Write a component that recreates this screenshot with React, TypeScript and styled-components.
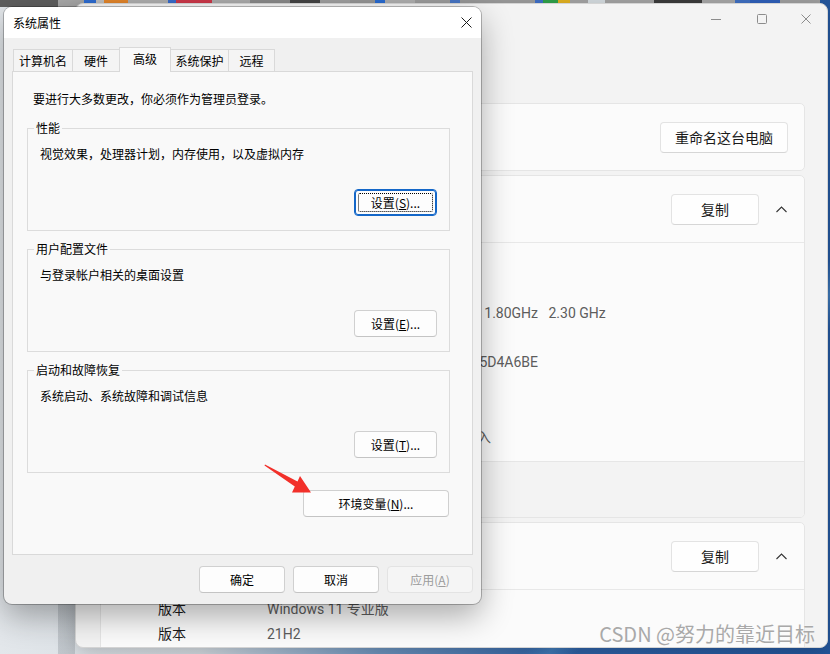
import React from "react";
import styled, { createGlobalStyle, css } from "styled-components";

const GlobalStyle = createGlobalStyle`
  html, body {
    margin: 0;
    padding: 0;
  }
  body {
    width: 830px;
    height: 654px;
    overflow: hidden;
    background: #dfe4e9;
  }
  * {
    box-sizing: border-box;
  }
`;

// desktop behind both windows
const Desktop = styled.div`
  position: relative;
  width: 830px;
  height: 654px;
  overflow: hidden;
  background:
    linear-gradient(to right, transparent 58px, rgba(60, 70, 80, 0.18) 58px, rgba(60, 70, 80, 0.18) 75px, transparent 75px),
    linear-gradient(128deg, transparent 77%, rgba(70, 130, 190, 0.75) 79%, transparent 81%),
    linear-gradient(to right, #e3e7eb 0, #d4dbe1 200px, #6d93bd 380px, #2f62a6 560px, #23569c 830px);
`;

const IconStrip = styled.div`
  display: flex;
  height: 7px;
`;

const StripBit = styled.div<{ $w: number; $c: string }>`
  width: ${(p) => p.$w}px;
  background: ${(p) => p.$c};
`;

/* ---------- settings window (behind) ---------- */

const SettingsWindow = styled.section`
  position: absolute;
  left: 75px;
  top: 3px;
  width: 753px;
  height: 645px;
  z-index: 1;
  display: flex;
  flex-direction: column;
  background: #f3f3f3;
  border: 1px solid #d4d4d4;
  border-radius: 8px;
  overflow: hidden;
  box-shadow: 0 6px 22px rgba(0, 0, 0, 0.2);
  font-family: Roboto, "Noto Sans CJK SC", sans-serif;
  font-size: 14px;
  color: #1b1b1b;
`;

const WinTitleBar = styled.div`
  height: 29px;
  flex: none;
  display: flex;
  justify-content: flex-end;
  align-items: center;
`;

const WinControl = styled.div<{ $w: number }>`
  width: ${(p) => p.$w}px;
  height: 29px;
  display: flex;
  align-items: center;
  justify-content: center;
`;

const CardColumn = styled.div`
  display: flex;
  flex-direction: column;
  gap: 4px;
  padding: 70px 22px 0 24px;
`;

const Card = styled.div`
  flex: none;
  background: #fbfbfb;
  border: 1px solid #e5e5e5;
  border-radius: 5px;
  overflow: hidden;
`;

const CardHeader = styled.div<{ $h: number; $pr: number; $divider?: boolean }>`
  height: ${(p) => p.$h}px;
  display: flex;
  align-items: center;
  gap: 14px;
  padding: 0 ${(p) => p.$pr}px 0 57px;
  ${(p) => p.$divider && css`
    border-bottom: 1px solid #e8e8e8;
    box-sizing: content-box;
  `}
`;

const HeaderTitle = styled.div`
  flex: 1;
  color: #1b1b1b;
`;

const FluentButton = styled.div<{ $w: number }>`
  width: ${(p) => p.$w}px;
  height: 31px;
  display: flex;
  align-items: center;
  justify-content: center;
  background: #fefefe;
  border: 1px solid #e3e3e3;
  border-bottom-color: #d6d6d6;
  border-radius: 4px;
  color: #1b1b1b;
`;

const Chevron = styled.div`
  width: 16px;
  display: flex;
  justify-content: center;
`;

const SpecBody = styled.div<{ $h: number; $pt: number }>`
  height: ${(p) => p.$h}px;
  padding-top: ${(p) => p.$pt}px;
`;

const SpecRow = styled.div`
  display: grid;
  grid-template-columns: 109px 1fr;
  padding-left: 57px;
  height: 24.8px;
  line-height: 24.8px;
  white-space: pre;
`;

const SpecLabel = styled.span`
  color: #1b1b1b;
`;

const SpecValue = styled.span`
  color: #5d5d5d;
`;

const CardFooter = styled.div`
  height: 56px;
  border-top: 1px solid #e6e6e6;
  background: #f3f3f3;
`;

/* ---------- system properties dialog ---------- */

const Dialog = styled.div`
  position: absolute;
  left: 4px;
  top: 7px;
  width: 477px;
  height: 597px;
  z-index: 2;
  display: flex;
  flex-direction: column;
  background: #f0f0f0;
  border-radius: 8px;
  overflow: hidden;
  box-shadow: 0 0 0 1px rgba(0, 0, 0, 0.25), 0 12px 32px rgba(0, 0, 0, 0.32);
  font-family: "Noto Sans CJK SC", "Microsoft YaHei", sans-serif;
  font-size: 12px;
  line-height: 16px;
  color: #000;
`;

const DialogTitleBar = styled.div`
  height: 31px;
  flex: none;
  display: flex;
  align-items: center;
  justify-content: space-between;
  padding-left: 9px;
  background: #fff;
`;

const DialogClose = styled.div`
  width: 30px;
  height: 31px;
  display: flex;
  align-items: center;
  justify-content: center;
`;

const DialogBody = styled.div`
  flex: 1;
  display: flex;
  flex-direction: column;
  padding: 11px 8px 11px;
`;

const TabStrip = styled.div`
  height: 22px;
  display: flex;
  align-items: flex-end;
  padding-left: 1px;
  position: relative;
  z-index: 1;
`;

const Tab = styled.div<{ $w: number; $active?: boolean }>`
  width: ${(p) => p.$w}px;
  height: 22px;
  display: flex;
  align-items: center;
  justify-content: center;
  border: 1px solid #d9d9d9;
  border-bottom: none;
  background: #f4f4f4;
  & + & {
    margin-left: -1px;
  }
  ${(p) => p.$active && css`
    height: 25px;
    margin-bottom: -1px;
    background: #f9f9f9;
    position: relative;
    z-index: 1;
    padding-bottom: 3px;
  `}
`;

const TabPanel = styled.div`
  flex: 1;
  background: #f9f9f9;
  border: 1px solid #d9d9d9;
  padding: 19px 0 0 14px;
`;

const Notice = styled.div`
  margin-left: 6px;
`;

const GroupBox = styled.fieldset`
  width: 423px;
  margin: 10px 0 0;
  padding: 0 12px 14px;
  border: 1px solid #dcdcdc;
  min-width: 0;
  &:first-of-type {
    margin-top: 13px;
  }
`;

const GroupLegend = styled.legend`
  padding: 0 2px;
  margin-left: -6px;
  line-height: 16px;
`;

const GroupDesc = styled.div`
  margin-top: 10px;
`;

const ButtonLine = styled.div<{ $mt: number; $pr?: number }>`
  display: flex;
  justify-content: flex-end;
  margin-top: ${(p) => p.$mt}px;
  padding-right: ${(p) => p.$pr ?? 0}px;
`;

const EnvLine = styled(ButtonLine)`
  width: 423px;
`;

const WinButton = styled.div<{ $w: number; $focused?: boolean; $muted?: boolean }>`
  position: relative;
  width: ${(p) => p.$w}px;
  height: 27px;
  display: flex;
  align-items: center;
  justify-content: center;
  background: #fdfdfd;
  border: 1px solid #d0d0d0;
  border-bottom-color: #c4c4c4;
  border-radius: 4px;
  color: #000;
  ${(p) => p.$focused && css`
    border-color: #1467c8;
    box-shadow: inset 0 0 0 1px #1467c8;
    &::after {
      content: "";
      position: absolute;
      inset: 3px;
      border: 1px dotted #000;
      border-radius: 2px;
    }
  `}
  ${(p) => p.$muted && css`
    background: #f5f5f5;
    border-color: #e3e3e3;
    color: #9c9c9c;
  `}
`;

const Caption = styled.span`
  white-space: nowrap;
`;

const BottomBar = styled.div`
  display: flex;
  justify-content: flex-end;
  gap: 8px;
  margin-top: 11px;
`;

const Arrow = styled.svg`
  position: absolute;
  left: 260px;
  top: 460px;
  z-index: 3;
`;

const Watermark = styled.div`
  position: absolute;
  right: 15px;
  top: 622px;
  z-index: 4;
  font-family: "Noto Sans CJK SC", sans-serif;
  font-size: 20px;
  line-height: 24px;
  color: #a9a9a9;
  text-shadow: 0 0 2px rgba(255, 255, 255, 0.8);
`;

const strip = [
  [58, "#5e5e5e"], [26, "#a8a8a8"], [12, "#2f6fd6"], [8, "#c4c4c4"], [24, "#e8892c"],
  [40, "#b3b3b3"], [8, "#3a6fd0"], [36, "#d23a4c"], [38, "#b0b0b0"], [40, "#8e8e8e"],
  [30, "#474747"], [30, "#a5a5a5"], [25, "#9a9a9a"], [10, "#2a6fd8"], [30, "#b4b4b4"],
  [35, "#a0a0a0"], [10, "#4a7acb"], [75, "#9c9c9c"], [8, "#3e6fc6"], [15, "#2fa04a"],
  [12, "#e0b020"], [18, "#a3a3a3"], [17, "#d3dade"], [49, "#a2a2a2"], [48, "#3b3b3b"],
  [33, "#a6a6a6"], [15, "#3f6fc0"], [30, "#2f5fb8"], [40, "#9e9e9e"],
] as const;

const tabs = [
  { label: "计算机名", w: 60 },
  { label: "硬件", w: 48 },
  { label: "高级", w: 52, active: true },
  { label: "系统保护", w: 59 },
  { label: "远程", w: 47 },
];

const groups = [
  { title: "性能", desc: "视觉效果，处理器计划，内存使用，以及虚拟内存", key: "S", focused: true },
  { title: "用户配置文件", desc: "与登录帐户相关的桌面设置", key: "E" },
  { title: "启动和故障恢复", desc: "系统启动、系统故障和调试信息", key: "T" },
];

const deviceSpecs = [
  ["设备名称", "DESKTOP-7QH2K4M"],
  ["处理器", "Intel(R) Core(TM) i5-8250U CPU @ 1.80GHz   2.30 GHz"],
  ["机带 RAM", "8.00 GB (7.85 GB 可用)"],
  ["设备 ID", "8E5A1C02-3F7B-4D9E-A21C-7B905D4A6BE"],
  ["产品 ID", "00330-80000-00000-AA442"],
  ["系统类型", "64 位操作系统, 基于 x64 的处理器"],
  ["笔和触控", "没有可用于此显示器的笔或触控输入"],
];

const windowsSpecs = [
  ["版本", "Windows 11 专业版"],
  ["版本", "21H2"],
];

const ChevronUp = () => (
  <svg width="11" height="7" viewBox="0 0 11 7">
    <polyline points="0.5,6 5.5,1 10.5,6" fill="none" stroke="#333" strokeWidth="1.1" />
  </svg>
);

const App = () => {
  return (
    <>
      <GlobalStyle />
      <Desktop>
        <IconStrip>
          {strip.map(([w, c], i) => (
            <StripBit key={i} $w={w} $c={c} />
          ))}
        </IconStrip>

        <SettingsWindow>
          <WinTitleBar>
            <WinControl $w={46}>
              <svg width="10" height="10" viewBox="0 0 10 10">
                <line x1="0" y1="5.5" x2="10" y2="5.5" stroke="#8c8c8c" strokeWidth="1" />
              </svg>
            </WinControl>
            <WinControl $w={46}>
              <svg width="10" height="10" viewBox="0 0 10 10">
                <rect x="0.5" y="0.5" width="9" height="9" rx="1" fill="none" stroke="#8c8c8c" strokeWidth="1" />
              </svg>
            </WinControl>
            <WinControl $w={42}>
              <svg width="10" height="10" viewBox="0 0 10 10">
                <path d="M0.5 0.5 L9.5 9.5 M9.5 0.5 L0.5 9.5" stroke="#8c8c8c" strokeWidth="1" />
              </svg>
            </WinControl>
          </WinTitleBar>

          <CardColumn>
            <Card>
              <CardHeader $h={66} $pr={16}>
                <HeaderTitle>DESKTOP-7QH2K4M</HeaderTitle>
                <FluentButton $w={128}>重命名这台电脑</FluentButton>
              </CardHeader>
            </Card>

            <Card>
              <CardHeader $h={66} $pr={15} $divider>
                <HeaderTitle>设备规格</HeaderTitle>
                <FluentButton $w={88}>复制</FluentButton>
                <Chevron>
                  <ChevronUp />
                </Chevron>
              </CardHeader>
              <SpecBody $h={218} $pt={33}>
                {deviceSpecs.map(([label, value]) => (
                  <SpecRow key={label}>
                    <SpecLabel>{label}</SpecLabel>
                    <SpecValue>{value}</SpecValue>
                  </SpecRow>
                ))}
              </SpecBody>
              <CardFooter />
            </Card>

            <Card>
              <CardHeader $h={66} $pr={15} $divider>
                <HeaderTitle>Windows 规格</HeaderTitle>
                <FluentButton $w={88}>复制</FluentButton>
                <Chevron>
                  <ChevronUp />
                </Chevron>
              </CardHeader>
              <SpecBody $h={70} $pt={7}>
                {windowsSpecs.map(([label, value], i) => (
                  <SpecRow key={i}>
                    <SpecLabel>{label}</SpecLabel>
                    <SpecValue>{value}</SpecValue>
                  </SpecRow>
                ))}
              </SpecBody>
            </Card>
          </CardColumn>
        </SettingsWindow>

        <Dialog>
          <DialogTitleBar>
            <span>系统属性</span>
            <DialogClose>
              <svg width="11" height="11" viewBox="0 0 11 11">
                <path d="M0.5 0.5 L10.5 10.5 M10.5 0.5 L0.5 10.5" stroke="#1a1a1a" strokeWidth="1" />
              </svg>
            </DialogClose>
          </DialogTitleBar>

          <DialogBody>
            <TabStrip>
              {tabs.map((t) => (
                <Tab key={t.label} $w={t.w} $active={t.active}>
                  {t.label}
                </Tab>
              ))}
            </TabStrip>

            <TabPanel>
              <Notice>要进行大多数更改，你必须作为管理员登录。</Notice>
              {groups.map((g) => (
                <GroupBox key={g.title}>
                  <GroupLegend>{g.title}</GroupLegend>
                  <GroupDesc>{g.desc}</GroupDesc>
                  <ButtonLine $mt={27}>
                    <WinButton $w={83} $focused={g.focused}>
                      <Caption>
                        设置(<u>{g.key}</u>)...
                      </Caption>
                    </WinButton>
                  </ButtonLine>
                </GroupBox>
              ))}
              <EnvLine $mt={17} $pr={1}>
                <WinButton $w={146}>
                  <Caption>
                    环境变量(<u>N</u>)...
                  </Caption>
                </WinButton>
              </EnvLine>
            </TabPanel>

            <BottomBar>
              <WinButton $w={86}>确定</WinButton>
              <WinButton $w={86}>取消</WinButton>
              <WinButton $w={86} $muted>
                <Caption>
                  应用(<u>A</u>)
                </Caption>
              </WinButton>
            </BottomBar>
          </DialogBody>
        </Dialog>

        <Arrow width="56" height="38" viewBox="0 0 56 38">
          <polygon
            points="5,4.5 37.5,21.5 40,16 51,32.5 32,32.5 34.8,26.5 4.5,5.5"
            fill="#f2302a"
          />
        </Arrow>

        <Watermark>CSDN @努力的靠近目标</Watermark>
      </Desktop>
    </>
  );
};

export default App;
